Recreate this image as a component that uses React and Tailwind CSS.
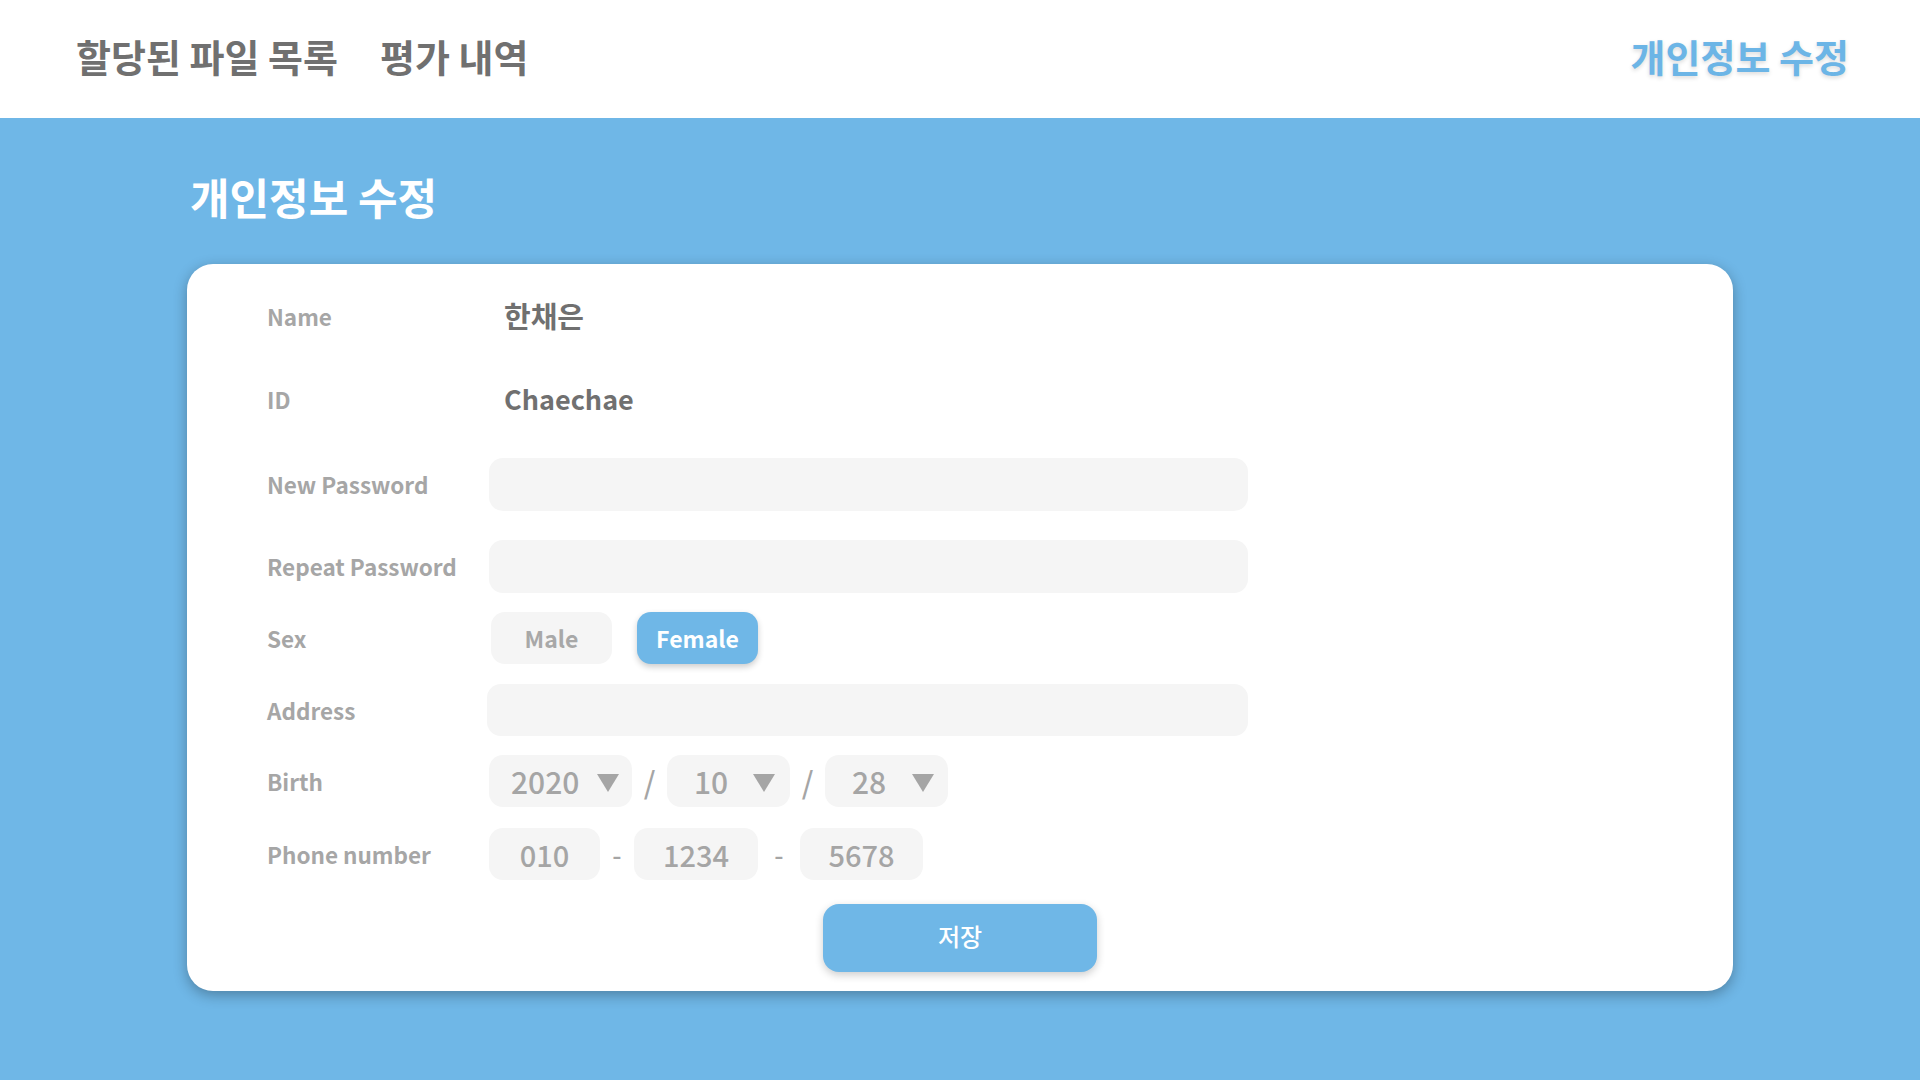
import React from "react";

const FONT = { fontFamily: '"Noto Sans CJK KR", "Noto Sans", sans-serif' };

function Tri() {
  return (
    <svg width="24" height="20" viewBox="0 0 24 20" className="mt-[4px]">
      <polygon points="1,1 23,1 12,19" fill="#a5a5a5" />
    </svg>
  );
}

function Label({ children }) {
  return (
    <div className="w-[222px] shrink-0 text-[22.5px] font-bold text-[#a6a6a6] leading-none">
      {children}
    </div>
  );
}

function Row({ label, className = "", children }) {
  return (
    <div className={"flex items-center " + className}>
      <Label>{label}</Label>
      {children}
    </div>
  );
}

function Box({ className = "", children }) {
  return (
    <div className={"h-[52px] rounded-[14px] bg-[#f5f5f5] flex items-center " + className}>
      {children}
    </div>
  );
}

export default function App() {
  return (
    <div className="min-h-screen bg-[#6fb7e7]" style={FONT}>
      <header className="h-[118px] bg-white flex items-center justify-between pl-[76px] pr-[71px] pb-[7px]">
        <nav className="flex items-center gap-[42px] text-[38px] font-bold text-[#707070] leading-none">
          <span>할당된 파일 목록</span>
          <span>평가 내역</span>
        </nav>
        <span className="text-[38px] font-bold text-[#6cb5e6] leading-none [text-shadow:0_2px_4px_rgba(0,0,0,0.15)]">
          개인정보 수정
        </span>
      </header>

      <main className="mx-[187px] pt-[50px]">
        <h1 className="pl-[3px] text-[43px] font-bold text-white leading-[56px]">개인정보 수정</h1>
        <div className="mt-[40px] bg-white rounded-[26px] shadow-[0_4px_14px_rgba(0,0,0,0.3)] pl-[80px] pt-[26px] pb-[19px]">
          <Row label="Name" className="h-[52px]">
            <span className="pl-[15px] text-[29px] font-bold text-[#707070]">한채은</span>
          </Row>
          <Row label="ID" className="h-[52px] mt-[31px]">
            <span className="pl-[15px] text-[27px] font-bold text-[#707070]">Chaechae</span>
          </Row>
          <Row label="New Password" className="mt-[33px]">
            <Box className="w-[759px] h-[53px]" />
          </Row>
          <Row label="Repeat Password" className="mt-[29px]">
            <Box className="w-[759px] h-[53px]" />
          </Row>
          <Row label="Sex" className="mt-[19px]">
            <div className="flex items-center gap-[25px] pl-[2px]">
              <button className="w-[121px] h-[52px] rounded-[14px] bg-[#f5f5f5] text-[23px] font-bold text-[#a8a8a8]">
                Male
              </button>
              <button className="w-[121px] h-[52px] rounded-[14px] bg-[#6fb7e7] text-[23px] font-bold text-white shadow-[0_3px_6px_rgba(0,0,0,0.2)]">
                Female
              </button>
            </div>
          </Row>
          <Row label="Address" className="mt-[20px]">
            <Box className="w-[761px] -ml-[2px]" />
          </Row>
          <Row label="Birth" className="mt-[19px]">
            <div className="flex items-center text-[30px] font-medium text-[#a5a5a5] leading-none">
              <Box className="w-[143px] pl-[22px] pr-[12px] justify-between">
                <span>2020</span>
                <Tri />
              </Box>
              <span className="w-[35px] text-center">/</span>
              <Box className="w-[123px] pl-[27px] pr-[14px] justify-between">
                <span>10</span>
                <Tri />
              </Box>
              <span className="w-[35px] text-center">/</span>
              <Box className="w-[123px] pl-[27px] pr-[13px] justify-between">
                <span>28</span>
                <Tri />
              </Box>
            </div>
          </Row>
          <Row label="Phone number" className="mt-[21px]">
            <div className="flex items-center text-[29px] font-medium text-[#a5a5a5] leading-none">
              <Box className="w-[111px] justify-center">010</Box>
              <span className="w-[34px] text-center text-[26px]">-</span>
              <Box className="w-[124px] justify-center">1234</Box>
              <span className="w-[42px] text-center text-[26px]">-</span>
              <Box className="w-[123px] justify-center">5678</Box>
            </div>
          </Row>
          <div className="mt-[24px] flex">
            <button className="ml-[556px] w-[274px] h-[68px] rounded-[16px] bg-[#6fb7e7] text-white text-[24px] font-medium leading-none pb-[4px] shadow-[0_3px_8px_rgba(0,0,0,0.2)]">
              저장
            </button>
          </div>
        </div>
      </main>
    </div>
  );
}
